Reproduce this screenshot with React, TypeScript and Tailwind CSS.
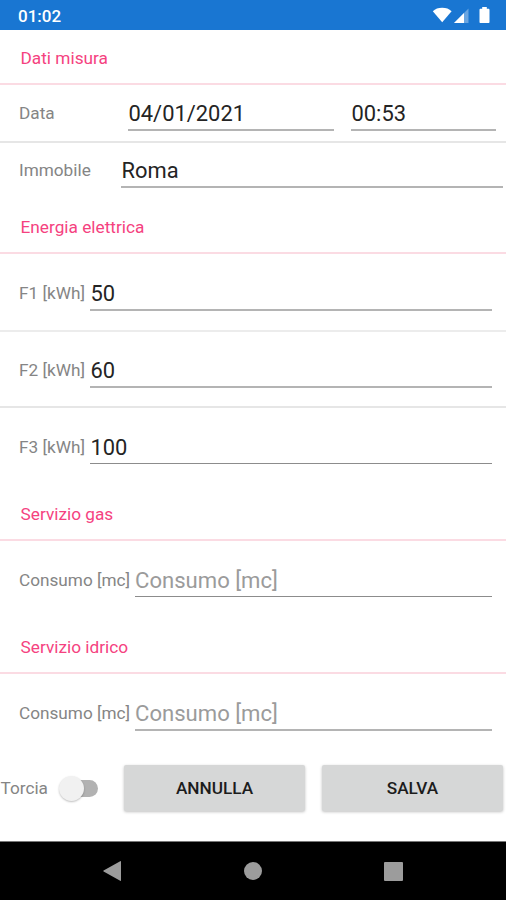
import type { ReactNode } from 'react';
import clsx from 'clsx';

function StatusBar() {
  return (
    <div className="flex h-[30px] items-center justify-between bg-[#1976d2] pl-[18px] pr-4 pt-0.5">
      <span className="text-[17px] font-medium leading-none text-white">01:02</span>
      <div className="flex items-center">
        <svg className="h-[18px] w-5" viewBox="0 0 20 18" fill="#fff">
          <path d="M0.8 4.200C3.300 1.900 6.200 0.800 10.200 0.800s6.900 1.100 9.400 3.400L10.200 15.200z" />
        </svg>
        <svg className="ml-0.5 h-[18px] w-4" viewBox="0 0 16 18" fill="#fff">
          <path d="M14.500 1.500v14.500H0z" opacity="0.35" />
          <path d="M10 6V16H0z" />
        </svg>
        <svg className="ml-[9px] h-[18px] w-[11px]" viewBox="0 0 11 18" fill="#fff">
          <path d="M3.200 0h4.600v1.800h1.600c0.700 0 1.100 0.400 1.100 1.100v12c0 0.700-0.400 1.100-1.100 1.100H1.600c-0.700 0-1.100-0.400-1.100-1.100v-12c0-0.700 0.400-1.100 1.100-1.100h1.600z" />
        </svg>
      </div>
    </div>
  );
}

function SectionTitle({ children }: { children: ReactNode }) {
  return (
    <h2 className="flex h-[55px] items-center border-b-2 border-[#fbdbe3] pl-[20.5px] pt-1 text-[17.25px] text-[#f5427f]">
      {children}
    </h2>
  );
}

function Row({ label, children, className }: { label: string; children: ReactNode; className: string }) {
  return (
    <div className={clsx('flex items-center pl-[19px]', className)}>
      <span className="shrink-0 pt-0.5 text-[17.2px] text-[#858585]">{label}</span>
      {children}
    </div>
  );
}

type FieldProps = {
  value?: string;
  placeholder?: string;
  thin?: boolean;
  className: string;
};

function Field({ value, placeholder, thin, className }: FieldProps) {
  return (
    <div
      className={clsx(
        'shrink-0 whitespace-nowrap',
        thin ? 'h-[34px] border-b border-[#8c8c8c] pt-px' : 'h-9 border-b-2 border-[#b4b4b4] pt-0.5',
        value
          ? 'pl-[0.5px] text-[21.9px] leading-[34px] text-[#242424]'
          : 'text-[22.1px] leading-8 text-[#9b9b9b]',
        className,
      )}
    >
      {value ?? placeholder}
    </div>
  );
}

function Button({ children, className }: { children: ReactNode; className: string }) {
  return (
    <button
      className={clsx(
        'h-[46px] shrink-0 rounded-[2px] bg-[#d6d7d7] pt-0.5 text-[17.2px] font-medium text-[#1c1c1c] shadow-[0_1px_3px_rgba(0,0,0,0.25)]',
        className,
      )}
    >
      {children}
    </button>
  );
}

function NavBar() {
  return (
    <div className="flex h-[59px] items-center justify-between border-t border-[#777] bg-black pl-[102px] pr-[103px]">
      <svg className="h-[22px] w-5" viewBox="0 0 20 22" fill="#9c9c9c">
        <path d="M18.200 1.200Q19 0.700 19 1.700V20.300Q19 21.300 18.200 20.800L1.600 11.600Q0.800 11 1.600 10.400z" />
      </svg>
      <div className="size-[18px] rounded-full bg-[#9c9c9c]" />
      <div className="size-[19px] rounded-[1px] bg-[#9c9c9c]" />
    </div>
  );
}

export default function App() {
  return (
    <div className="flex h-[900px] w-[506px] flex-col overflow-hidden bg-white font-['Roboto',sans-serif]">
      <StatusBar />

      <SectionTitle>Dati misura</SectionTitle>
      <Row label="Data" className="h-[58px] border-b-2 border-[#e6e6e6]">
        <Field value="04/01/2021" className="ml-auto w-[206px]" />
        <Field value="00:53" className="ml-[17px] mr-2.5 w-[145px]" />
      </Row>
      <Row label="Immobile" className="h-14 pb-0.5">
        <Field value="Roma" className="ml-auto mr-[3px] w-[382px]" />
      </Row>

      <SectionTitle>Energia elettrica</SectionTitle>
      <Row label="F1 [kWh]" className="h-[78px] border-b-2 border-[#ececec] pt-0.5">
        <Field value="50" className="ml-auto mr-3.5 w-[402px]" />
      </Row>
      <Row label="F2 [kWh]" className="h-[76px] border-b-2 border-[#e6e6e6] pt-0.5">
        <Field value="60" className="ml-auto mr-3.5 w-[402px]" />
      </Row>
      <Row label="F3 [kWh]" className="h-[78px]">
        <Field value="100" thin className="ml-auto mr-3.5 w-[402px]" />
      </Row>

      <SectionTitle>Servizio gas</SectionTitle>
      <Row label="Consumo [mc]" className="h-[78px]">
        <Field placeholder="Consumo [mc]" thin className="ml-auto mr-3.5 w-[357px]" />
      </Row>

      <SectionTitle>Servizio idrico</SectionTitle>
      <Row label="Consumo [mc]" className="h-[78px]">
        <Field placeholder="Consumo [mc]" className="ml-auto mr-3.5 w-[357px]" />
      </Row>

      <div className="flex flex-1 items-start pl-[0.5px] pr-[3px] pt-[13px]">
        <div className="flex h-[46px] items-center">
          <span className="pt-px text-[17.2px] text-[#858585]">Torcia</span>
          <div className="ml-[11px] flex h-[26px] w-[39px] items-center">
            <div className="z-10 size-[25px] rounded-full bg-[#f1f1f1] shadow-[0_1px_2px_rgba(0,0,0,0.25)]" />
            <div className="-ml-1 h-[17px] flex-1 rounded-r-full bg-[#b2b2b2]" />
          </div>
        </div>
        <Button className="ml-auto w-[181px]">ANNULLA</Button>
        <Button className="ml-[17px] w-[181px]">SALVA</Button>
      </div>

      <NavBar />
    </div>
  );
}
